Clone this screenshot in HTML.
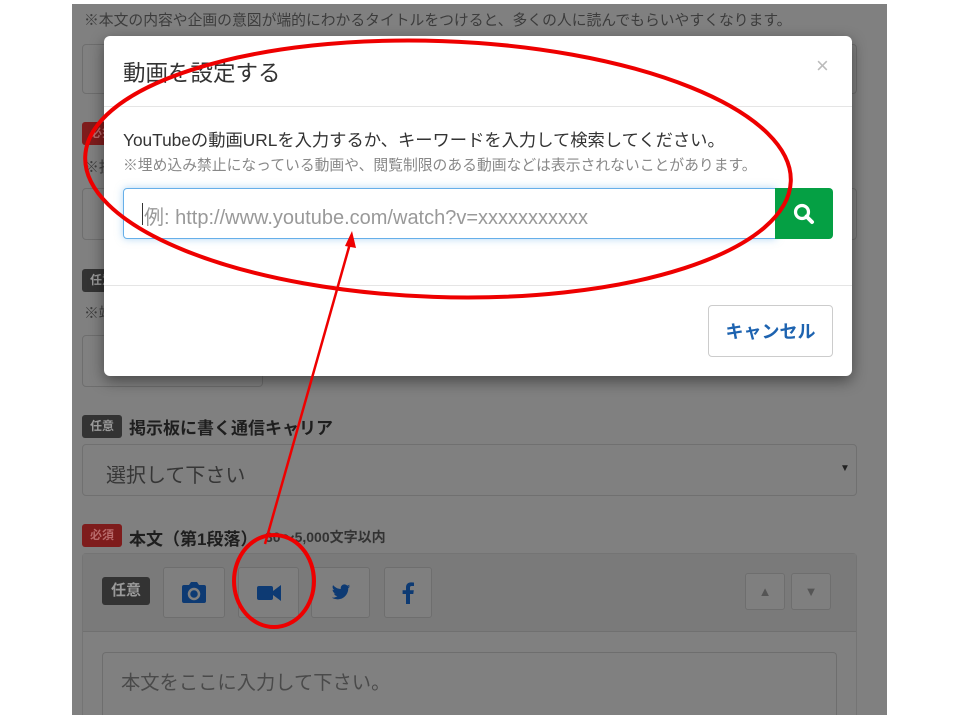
<!DOCTYPE html>
<html><head><meta charset="utf-8"><style>
*{box-sizing:border-box;margin:0;padding:0}
body{width:960px;height:720px;background:#fff;position:relative;overflow:hidden;font-family:"Liberation Sans","Noto Sans CJK JP",sans-serif}
.a{position:absolute}
.bg{left:72px;top:4px;width:815px;height:711px;background:#808080;overflow:hidden}
.box{border:1px solid #6e6e6e;border-radius:4px;background:#808080}
.txt{color:#3c3c3c;font-size:14.8px;white-space:nowrap}
.bdg{height:23px;border-radius:3px;color:#8a8a8a;font-size:12px;font-weight:bold;line-height:23px;text-align:center;width:40px}
.nin{background:#333;color:#9a9a9a}
.hi{background:#7e1c1c;color:#b86a6a}
.lbl{font-size:17.7px;font-weight:bold;color:#1e1e1e;white-space:nowrap}
.btn{border:1px solid #6e6e6e;border-radius:3px;background:#7f7f7f;display:flex;align-items:center;justify-content:center}
.modal{left:104px;top:36px;width:748px;height:340px;background:#fff;border-radius:6px;box-shadow:0 5px 15px rgba(0,0,0,.45)}
</style></head><body>
<div class="a bg"></div>
<div class="a txt" style="left:84px;top:9px">※本文の内容や企画の意図が端的にわかるタイトルをつけると、多くの人に読んでもらいやすくなります。</div>
<div class="a box" style="left:82px;top:44px;width:775px;height:50px"></div>
<div class="a bdg hi" style="left:82px;top:122px">必須</div>
<div class="a txt" style="left:84px;top:156px">※投</div>
<div class="a box" style="left:82px;top:188px;width:775px;height:52px"></div>
<div class="a bdg nin" style="left:82px;top:269px">任意</div>
<div class="a txt" style="left:84px;top:302px">※端</div>
<div class="a box" style="left:82px;top:335px;width:181px;height:52px"></div>
<div class="a bdg nin" style="left:82px;top:415px">任意</div>
<div class="a lbl" style="left:129px;top:414px;font-size:17px">掲示板に書く通信キャリア</div>
<div class="a box" style="left:82px;top:444px;width:775px;height:52px;border-color:#707070"></div>
<div class="a" style="left:106px;top:459px;font-size:20px;color:#363636">選択して下さい</div>
<div class="a" style="left:840px;top:463px;font-size:10px;color:#222">▼</div>
<div class="a bdg hi" style="left:82px;top:524px">必須</div>
<div class="a lbl" style="left:129px;top:525px;font-size:17px">本文（第1段落）</div>
<div class="a" style="left:265px;top:527px;font-size:14px;font-weight:bold;color:#333">30〜5,000文字以内</div>
<div class="a" style="left:82px;top:553px;width:775px;height:162px;border:1px solid #747474;border-bottom:none;border-radius:4px 4px 0 0;background:#808080"></div>
<div class="a" style="left:83px;top:554px;width:773px;height:78px;background:#7a7a7a;border-bottom:1px solid #707070"></div>
<div class="a bdg nin" style="left:102px;top:577px;width:48px;height:28px;line-height:28px;font-size:15px">任意</div>
<div class="a btn" style="left:163px;top:567px;width:62px;height:51px"><svg width="26" height="22" viewBox="0 0 26 22"><path d="M8 3 L10 0 H16 L18 3 H23 Q25 3 25 5 V19 Q25 21 23 21 H3 Q1 21 1 19 V5 Q1 3 3 3Z" fill="#0d3a73"/><circle cx="13" cy="12" r="5" fill="none" stroke="#7f7f7f" stroke-width="2.5"/></svg></div>
<div class="a btn" style="left:238px;top:567px;width:61px;height:51px"><svg width="24" height="16" viewBox="0 0 24 16"><rect x="0" y="1" width="16" height="14" rx="2" fill="#0d3a73"/><path d="M16 6 L24 0 V16 L16 10Z" fill="#0d3a73"/></svg></div>
<div class="a btn" style="left:311px;top:567px;width:59px;height:51px"><svg width="20" height="17" viewBox="0 0 24 20"><path d="M23 2.5c-.8.4-1.7.6-2.6.7.9-.6 1.6-1.4 2-2.5-.9.5-1.9.9-2.9 1.1C18.6.9 17.4.3 16.2.3c-2.5 0-4.5 2-4.5 4.5 0 .4 0 .7.1 1C8 5.6 4.7 3.8 2.5 1.1c-.4.7-.6 1.4-.6 2.3 0 1.6.8 2.9 2 3.8-.7 0-1.400-.2-2-.6v.1c0 2.2 1.6 4 3.6 4.4-.7.2-1.4.2-2 .1.6 1.8 2.2 3.1 4.2 3.1-1.5 1.2-3.5 1.9-5.6 1.9H1c2 1.3 4.4 2 6.9 2 8.3 0 12.8-6.9 12.8-12.8v-.6c.9-.6 1.7-1.4 2.3-2.3z" fill="#0d3a73"/></svg></div>
<div class="a btn" style="left:384px;top:567px;width:48px;height:51px"><svg width="12" height="22" viewBox="0 0 12 22"><path d="M8 22V12h3.3l.5-3.8H8V5.8c0-1.1.3-1.8 1.9-1.8H12V.6C11.6.5 10.4.4 9 .4 6 .4 4 2.2 4 5.5v2.7H.6V12H4v10z" fill="#0d3a73"/></svg></div>
<div class="a btn" style="left:745px;top:573px;width:40px;height:37px;color:#555;font-size:13px">▲</div>
<div class="a btn" style="left:791px;top:573px;width:40px;height:37px;color:#555;font-size:13px">▼</div>
<div class="a" style="left:102px;top:652px;width:735px;height:63px;border:1px solid #6e6e6e;border-bottom:none;border-radius:4px 4px 0 0;background:#808080"></div>
<div class="a" style="left:121px;top:667px;font-size:19.3px;color:#4a4a4a">本文をここに入力して下さい。</div>

<div class="a modal">
<div class="a" style="left:19px;top:20px;font-size:22.5px;color:#333">動画を設定する</div>
<div class="a" style="left:712px;top:17px;font-size:22px;color:#bbb">×</div>
<div class="a" style="left:0;top:70px;width:748px;height:1px;background:#e5e5e5"></div>
<div class="a" style="left:19px;top:90px;font-size:17.3px;color:#333;white-space:nowrap">YouTubeの動画URLを入力するか、キーワードを入力して検索してください。</div>
<div class="a" style="left:19px;top:118px;font-size:14.8px;color:#888;white-space:nowrap">※埋め込み禁止になっている動画や、閲覧制限のある動画などは表示されないことがあります。</div>
<div class="a" style="left:19px;top:152px;width:653px;height:51px;border:1px solid #66afe9;border-radius:4px 0 0 4px;box-shadow:0 0 8px rgba(102,175,233,.5)"></div>
<div class="a" style="left:38px;top:167px;width:1px;height:22px;background:#333"></div>
<div class="a" style="left:40px;top:165px;font-size:20px;color:#999;white-space:nowrap">例: http://www.youtube.com/watch?v=xxxxxxxxxxx</div>
<div class="a" style="left:671px;top:152px;width:58px;height:51px;background:#05a044;border-radius:0 4px 4px 0;display:flex;align-items:center;justify-content:center"><svg width="22" height="22" viewBox="0 0 22 22"><circle cx="9" cy="9" r="6.5" fill="none" stroke="#fff" stroke-width="3.2"/><path d="M13.5 13.5 L19 19" stroke="#fff" stroke-width="4" stroke-linecap="round"/></svg></div>
<div class="a" style="left:0;top:249px;width:748px;height:1px;background:#e5e5e5"></div>
<div class="a" style="left:604px;top:269px;width:125px;height:52px;border:1px solid #ccc;border-radius:4px;display:flex;align-items:center;justify-content:center;font-size:18px;font-weight:bold;color:#1d63b0">キャンセル</div>
</div>

<svg class="a" style="left:0;top:0" width="960" height="720">
<ellipse cx="438" cy="169" rx="353" ry="128" transform="rotate(2 438 169)" fill="none" stroke="#e00" stroke-width="4"/>
<ellipse cx="274" cy="581" rx="40" ry="46" fill="none" stroke="#e00" stroke-width="4"/>
<line x1="265" y1="544" x2="351" y2="240" stroke="#e00" stroke-width="2.5"/>
<path d="M352 231 L345 246 L356 248Z" fill="#e00"/>
</svg>
</body></html>
